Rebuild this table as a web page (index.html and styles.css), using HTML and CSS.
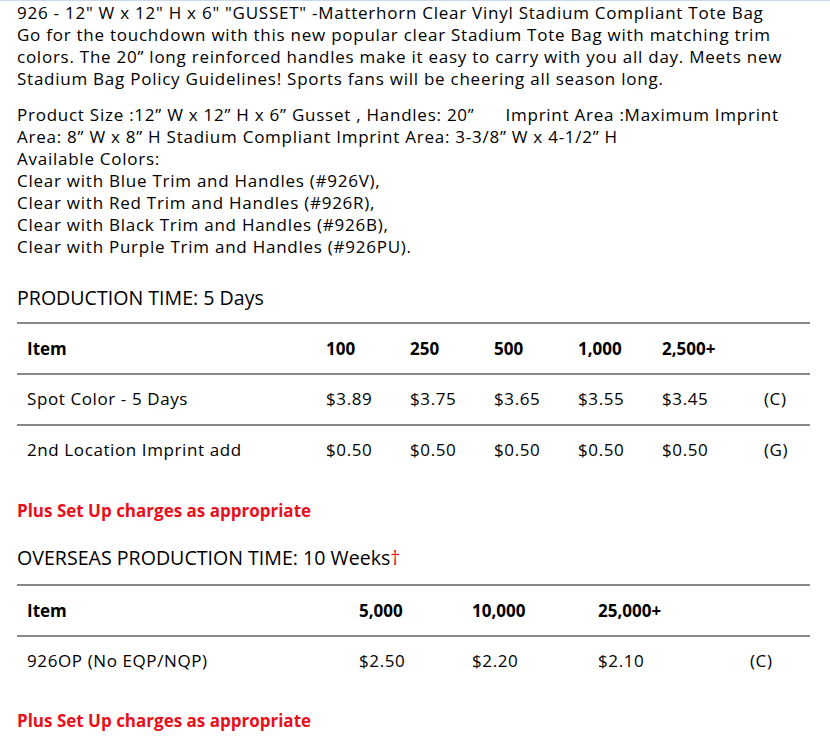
FILE: index.html
```html
<!DOCTYPE html>
<html>
<head>
<meta charset="utf-8">
<link rel="stylesheet" href="styles.css">
</head>
<body>
<div class="page">
  <p class="desc">926 - 12" W x 12" H x 6" "GUSSET" -Matterhorn Clear Vinyl Stadium Compliant Tote Bag<br>Go for the touchdown with this new popular clear Stadium Tote Bag with matching trim colors. The 20” long reinforced handles make it easy to carry with you all day. Meets new Stadium Bag Policy Guidelines! Sports fans will be cheering all season long.</p>
  <p class="desc">Product Size :12” W x 12” H x 6” Gusset , Handles: 20”&nbsp;&nbsp;&nbsp;&nbsp;&nbsp; Imprint Area :Maximum Imprint Area: 8” W x 8” H Stadium Compliant Imprint Area: 3-3/8” W x 4-1/2” H<br>Available Colors:<br>Clear with Blue Trim and Handles (#926V),<br>Clear with Red Trim and Handles (#926R),<br>Clear with Black Trim and Handles (#926B),<br>Clear with Purple Trim and Handles (#926PU).</p>

  <h2 class="heading">PRODUCTION TIME: 5 Days</h2>
  <table class="prices t1">
    <colgroup><col class="c-item1"><col class="c-q"><col class="c-q"><col class="c-q"><col class="c-q"><col class="c-q2"><col></colgroup>
    <tr class="head"><td>Item</td><td>100</td><td>250</td><td>500</td><td>1,000</td><td>2,500+</td><td></td></tr>
    <tr><td>Spot Color - 5 Days</td><td>$3.89</td><td>$3.75</td><td>$3.65</td><td>$3.55</td><td>$3.45</td><td>(C)</td></tr>
    <tr><td>2nd Location Imprint add</td><td>$0.50</td><td>$0.50</td><td>$0.50</td><td>$0.50</td><td>$0.50</td><td>(G)</td></tr>
  </table>
  <p class="note">Plus Set Up charges as appropriate</p>

  <h2 class="heading">OVERSEAS PRODUCTION TIME: 10 Weeks<span class="dagger">†</span></h2>
  <table class="prices t2">
    <colgroup><col class="c-item2"><col class="c-a"><col class="c-b"><col class="c-c"><col></colgroup>
    <tr class="head"><td>Item</td><td>5,000</td><td>10,000</td><td>25,000+</td><td></td></tr>
    <tr><td>926OP (No EQP/NQP)</td><td>$2.50</td><td>$2.20</td><td>$2.10</td><td>(C)</td></tr>
  </table>
  <p class="note">Plus Set Up charges as appropriate</p>
</div>
</body>
</html>
```
FILE: styles.css
```css
html, body {
  margin: 0;
  padding: 0;
  background: #fff;
}
body {
  border-top: 1px solid #c6d9ef;
  font-family: "Open Sans", "Noto Sans", sans-serif;
  color: #000;
}
.page {
  padding: 1px 20px 0 17px;
}
.desc {
  margin: 0 0 14px;
  font-size: 17px;
  line-height: 22px;
  letter-spacing: 0.75px;
}
.heading {
  margin: 26px 0 10px;
  font-size: 19.6px;
  line-height: 28px;
  font-weight: normal;
}
.note + .heading {
  margin-top: 21px;
  margin-bottom: 12px;
}
.dagger {
  color: #e8101a;
}
.prices {
  width: 100%;
  border-collapse: collapse;
  table-layout: fixed;
  font-size: 17px;
}
.prices tr {
  border-top: 2px solid #888;
}
.prices td {
  padding: 13px 0 14px 10px;
  line-height: 22px;
  white-space: nowrap;
  letter-spacing: 0.6px;
}
.prices .head td {
  padding: 14px 0 13px 10px;
  font-weight: bold;
  letter-spacing: 0;
}
.c-item1 { width: 299px; }
.c-q { width: 84px; }
.c-q2 { width: 102px; }
.c-item2 { width: 332px; }
.c-a { width: 113px; }
.c-b { width: 126px; }
.c-c { width: 152px; }
.note {
  margin: 24px 0 0;
  color: #e8101a;
  font-weight: bold;
  font-size: 17px;
  line-height: 24px;
}
.t2 + .note {
  margin-top: 23px;
}
```
